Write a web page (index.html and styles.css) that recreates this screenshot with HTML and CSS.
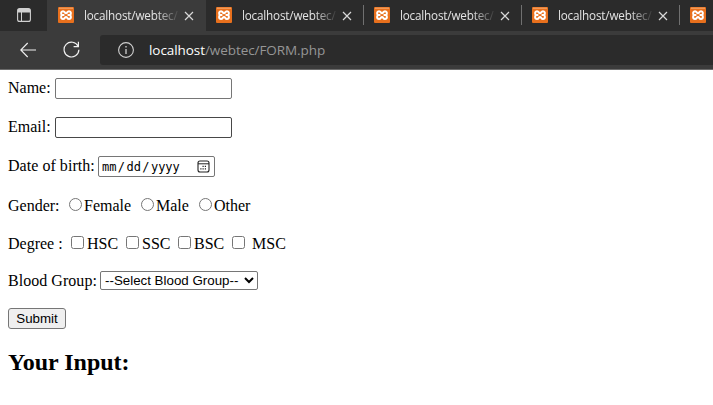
FILE: index.html
```html
<!DOCTYPE html>
<html lang="en">
<head>
<meta charset="utf-8">
<title>localhost/webtec/FORM.php</title>
<link rel="stylesheet" href="styles.css">
</head>
<body>
<svg width="0" height="0" class="defs">
  <symbol id="xampp" viewBox="0 0 16 16">
    <rect width="16" height="16" rx="1" fill="#e8701d"/>
    <path d="M1 1.2h14" stroke="#f4ab72" stroke-width="1"/>
    <path d="M6.4 8H4.2C2.6 7.4 2.6 4.3 5 4.3C7 4.3 6.6 6.2 8 6.2S9 4.3 11 4.3C13.4 4.3 13.4 7.4 11.8 8C13.4 8.6 13.4 11.9 11 11.9C9 11.9 9.4 10 8 10S7 11.9 5 11.9C2.6 11.9 2.6 8.6 4.2 8M9.6 8h2.2" fill="none" stroke="#fff" stroke-width="2"/>
  </symbol>
  <symbol id="close" viewBox="0 0 10 10"><path d="M1 1l8 8M9 1L1 9" stroke="#d8d8d8" stroke-width="1.2"/></symbol>
</svg>
<header>
  <div class="tabs">
    <div class="tab-menu">
      <svg width="14" height="14" viewBox="0 0 14 14"><rect x=".6" y=".6" width="12.8" height="12.8" rx="2" fill="none" stroke="#d0d0d0" stroke-width="1.1"/><path d="M1 1h12v3.5H1z" fill="#d0d0d0"/><path d="M4.5 4v9.5" stroke="#d0d0d0"/></svg>
    </div>
    <div class="tab active"><svg class="fav"><use href="#xampp"/></svg><span class="title">localhost/webtec/</span><svg class="close"><use href="#close"/></svg></div>
    <div class="tab"><svg class="fav"><use href="#xampp"/></svg><span class="title">localhost/webtec/</span><svg class="close"><use href="#close"/></svg></div>
    <div class="tab divided"><svg class="fav"><use href="#xampp"/></svg><span class="title">localhost/webtec/</span><svg class="close"><use href="#close"/></svg></div>
    <div class="tab divided"><svg class="fav"><use href="#xampp"/></svg><span class="title">localhost/webtec/</span><svg class="close"><use href="#close"/></svg></div>
    <div class="tab divided"><svg class="fav"><use href="#xampp"/></svg></div>
  </div>
  <div class="toolbar">
    <svg class="back" width="16" height="16" viewBox="0 0 16 16"><path d="M16 8H.8M7.7 1L.8 8l6.9 7" fill="none" stroke="#f0f0f0" stroke-width="1.1"/></svg>
    <svg class="reload" width="17" height="17" viewBox="0 0 17 17"><path d="M15.2 5.4A7.4 7.4 0 1 0 15.9 8.8M15.4 .8v4.8h-4.8" fill="none" stroke="#f0f0f0" stroke-width="1.2"/></svg>
    <div class="address">
      <svg width="16" height="16" viewBox="0 0 16 16"><circle cx="8" cy="8" r="7.4" fill="none" stroke="#d0d0d0" stroke-width="1.1"/><path d="M8 7v5M8 4v1.5" stroke="#d0d0d0" stroke-width="1.3"/></svg>
      <span class="url"><b>localhost</b>/webtec/FORM.php</span>
    </div>
  </div>
</header>
<main>
  <form>
    <div class="row"><label class="name">Name:</label><input type="text" class="field"></div>
    <div class="row"><label class="name">Email:</label><input type="text" class="field email"></div>
    <div class="row dob-row"><label class="dob">Date of birth:</label>
      <div class="date"><span>mm</span><i>/</i><span>dd</span><i>/</i><span>yyyy</span>
        <svg width="13" height="13" viewBox="0 0 13 13"><rect x="1" y="1" width="11" height="11" rx="2" fill="none" stroke="#222" stroke-width="1.1"/><path d="M1 3.8h11" stroke="#222"/><path d="M5.5 6.4h1.2M7.8 6.4H9M3.3 8.8h1.2M5.5 8.8h1.2M7.8 8.8H9" stroke="#222" stroke-width="1.2"/></svg>
      </div>
    </div>
    <div class="row choices gender"><span class="lead">Gender:</span>
      <label class="female"><input type="radio" name="gender">Female</label>
      <label class="male"><input type="radio" name="gender">Male</label>
      <label><input type="radio" name="gender">Other</label>
    </div>
    <div class="row choices degree"><span class="lead">Degree :</span>
      <label class="hsc"><input type="checkbox">HSC</label>
      <label class="ssc"><input type="checkbox">SSC</label>
      <label class="bsc"><input type="checkbox">BSC</label>
      <label class="msc"><input type="checkbox">MSC</label>
    </div>
    <div class="row blood"><label class="group">Blood Group:</label><select><option>--Select Blood Group--</option></select></div>
    <button type="button">Submit</button>
  </form>
  <h2>Your Input:</h2>
</main>
</body>
</html>
```
FILE: styles.css
```css
* { box-sizing: border-box; }
body { margin: 0; background: #fff; color: #000; font: 16px/18px "Liberation Serif", serif; overflow: hidden; }
svg { display: block; flex: none; }
.defs { position: absolute; }
header { height: 70px; background: #3b3b3b; border-bottom: 1px solid #6b6b6b; font-family: "Open Sans", "Noto Sans", sans-serif; }
.tabs { display: flex; height: 31px; background: #2b2b2b; overflow: hidden; }
.tab-menu { width: 47px; flex: none; padding: 8px 0 0 17px; }
.tab { width: 158px; flex: none; display: flex; padding: 7px 0 0 11px; position: relative; }
.tab.active { background: #3b3b3b; width: 159px; margin-right: -1px; }
.tab.divided::before { content: ""; position: absolute; left: 0; top: 5px; width: 1px; height: 20px; background: #707070; }
.fav { width: 16px; height: 16px; }
.title { width: 94px; margin-left: 10px; font-size: 11.7px; letter-spacing: -.18px; line-height: 16px; white-space: nowrap; color: #e4e4e4; -webkit-mask-image: linear-gradient(90deg, #000 72px, transparent 96px); mask-image: linear-gradient(90deg, #000 72px, transparent 96px); }
.close { width: 10px; height: 10px; margin: 4px 0 0 6px; }
.toolbar { display: flex; height: 38px; padding: 4px 0 0 20px; }
.back { margin-top: 7px; }
.reload { margin: 6px 0 0 27px; }
.address { display: flex; flex: 1; height: 30px; margin-left: 20px; padding: 7px 0 0 18px; background: #2b2b2b; border-radius: 3px 0 0 3px; }
.url { margin-left: 15px; color: #969696; font-size: 13.5px; letter-spacing: -.07px; line-height: 16px; }
.url b { color: #fff; font-weight: 400; }
main { padding: 8px 8px 0; }
.row { display: flex; height: 21px; margin-bottom: 18px; white-space: nowrap; }
.row > label, .lead { line-height: 20px; }
.name { width: 47px; }
.dob { width: 90px; letter-spacing: .04px; }
.dob-row { margin-bottom: 20px; }
.group { width: 92px; letter-spacing: .04px; }
.field { width: 177px; height: 21px; margin: 0; border: 1px solid #767676; border-radius: 2px; background: #fff; }
.email { border-color: #484848; }
.date { display: flex; width: 117px; height: 21px; padding: 0 4px 0 3px; border: 1px solid #767676; border-radius: 2px; font: 12px/21px "DejaVu Sans Mono", monospace; }
.date i { width: 10px; font-style: normal; text-align: center; }
.date svg { margin: 3px 0 0 auto; }
.choices { height: 18px; }
.choices label { display: flex; line-height: 18px; }
.choices .lead { line-height: 18px; }
.choices input { width: 13px; height: 13px; margin: 1px 2px 0 0; flex: none; }
.gender { margin-bottom: 20px; }
.gender .lead { width: 61px; }
.female { width: 72px; }
.male { width: 58px; }
.degree .lead { width: 63px; }
.degree input { margin-right: 3px; }
.hsc { width: 55px; }
.ssc { width: 52px; }
.bsc { width: 54px; }
.msc input { margin-right: 7px; }
.blood { height: 19px; }
select { width: 158px; height: 19px; margin: 0; padding: 0; border: 1px solid #767676; border-radius: 2px; background: #fff; color: #000; font: 13.333px "Liberation Sans", sans-serif; }
button { display: block; width: 58px; height: 21px; margin: 0; padding: 0; border: 1px solid #767676; border-radius: 3px; background: #efefef; color: #000; font: 13.333px/18px "Liberation Sans", sans-serif; }
h2 { margin: 20px 0 0; font-size: 24px; line-height: 27px; }
```
